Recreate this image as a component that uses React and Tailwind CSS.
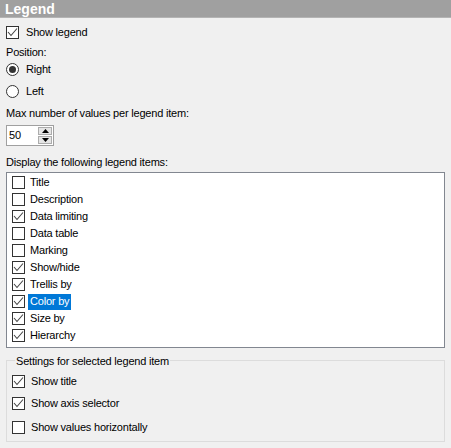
import React from "react";

const legendItems = [
  { label: "Title", checked: false },
  { label: "Description", checked: false },
  { label: "Data limiting", checked: true },
  { label: "Data table", checked: false },
  { label: "Marking", checked: false },
  { label: "Show/hide", checked: true },
  { label: "Trellis by", checked: true },
  { label: "Color by", checked: true, selected: true },
  { label: "Size by", checked: true },
  { label: "Hierarchy", checked: true },
];

const CheckBox = ({ checked }) => (
  <span className="w-[13px] h-[13px] border border-[#333333] bg-white flex items-center justify-center shrink-0">
    {checked && (
      <svg width="11" height="11" viewBox="0 0 11 11">
        <polyline
          points="1,5 4,8.5 10,1.5"
          fill="none"
          stroke="#444"
          strokeWidth="1.1"
        />
      </svg>
    )}
  </span>
);

const Radio = ({ checked }) => (
  <span className="w-[13px] h-[13px] rounded-full border border-[#333333] bg-white flex items-center justify-center shrink-0">
    {checked && <span className="w-[7px] h-[7px] rounded-full bg-[#333333]" />}
  </span>
);

const App = () => {
  return (
    <div
      className="w-[451px] h-[448px] bg-[#f0f0f0] text-[11px] tracking-[-0.2px] text-black overflow-hidden"
      style={{ fontFamily: '"Liberation Sans", Arial, sans-serif' }}
    >
      {/* Header */}
      <div className="h-[18px] bg-[#a0a0a0] border-b border-[#b4b4b4] flex items-center pl-[5px]">
        <span className="text-white font-bold text-[14px] tracking-normal leading-none">
          Legend
        </span>
      </div>

      <div className="px-[6px] flex flex-col">
        <div className="mt-[6px] h-[17px] flex items-center gap-[7px]">
          <CheckBox checked />
          <span>Show legend</span>
        </div>

        <div className="mt-[3px] h-[17px] flex items-center">Position:</div>

        <div className="h-[17px] flex items-center gap-[7px]">
          <Radio checked />
          <span>Right</span>
        </div>

        <div className="mt-[5px] h-[17px] flex items-center gap-[7px]">
          <Radio />
          <span>Left</span>
        </div>

        <div className="mt-[5px] h-[17px] flex items-center">
          Max number of values per legend item:
        </div>

        {/* Spinner */}
        <div className="mt-[3px] w-[48px] h-[21px] border border-[#a0a0a0] bg-white flex items-center">
          <span className="pl-[2px] flex-1">50</span>
          <div className="w-[14px] h-[17px] mr-[1px] flex flex-col gap-[1px]">
            <div className="flex-1 bg-[#e5e5e5] border border-[#acacac] flex items-center justify-center">
              <svg width="7" height="4" viewBox="0 0 7 4">
                <polygon points="3.5,0 7,4 0,4" fill="#000" />
              </svg>
            </div>
            <div className="flex-1 bg-[#e5e5e5] border border-[#acacac] flex items-center justify-center">
              <svg width="7" height="4" viewBox="0 0 7 4">
                <polygon points="0,0 7,0 3.5,4" fill="#000" />
              </svg>
            </div>
          </div>
        </div>

        <div className="mt-[8px] h-[17px] flex items-center">
          Display the following legend items:
        </div>

        {/* List box */}
        <div className="mt-[1px] h-[176px] border border-[#828790] bg-white pt-[1px] flex flex-col">
          {legendItems.map((item, index) => (
            <div key={index} className="h-[17px] flex items-center pl-[5px]">
              <CheckBox checked={item.checked} />
              <span
                className={`ml-[3px] px-[2px] h-[16px] flex items-center ${
                  item.selected ? "bg-[#0078d7] text-white" : ""
                }`}
              >
                {item.label}
              </span>
            </div>
          ))}
        </div>

        {/* Group box */}
        <div className="relative mt-[12px] h-[82px] border border-[#dcdcdc] flex flex-col pl-[5px]">
          <span className="absolute left-[8px] -top-[8px] px-[1px] bg-[#f0f0f0]">
            Settings for selected legend item
          </span>
          <div className="mt-[12px] h-[17px] flex items-center gap-[6px]">
            <CheckBox checked />
            <span>Show title</span>
          </div>
          <div className="mt-[5px] h-[17px] flex items-center gap-[6px]">
            <CheckBox checked />
            <span>Show axis selector</span>
          </div>
          <div className="mt-[7px] h-[17px] flex items-center gap-[6px]">
            <CheckBox />
            <span>Show values horizontally</span>
          </div>
        </div>
      </div>
    </div>
  );
};

export default App;
